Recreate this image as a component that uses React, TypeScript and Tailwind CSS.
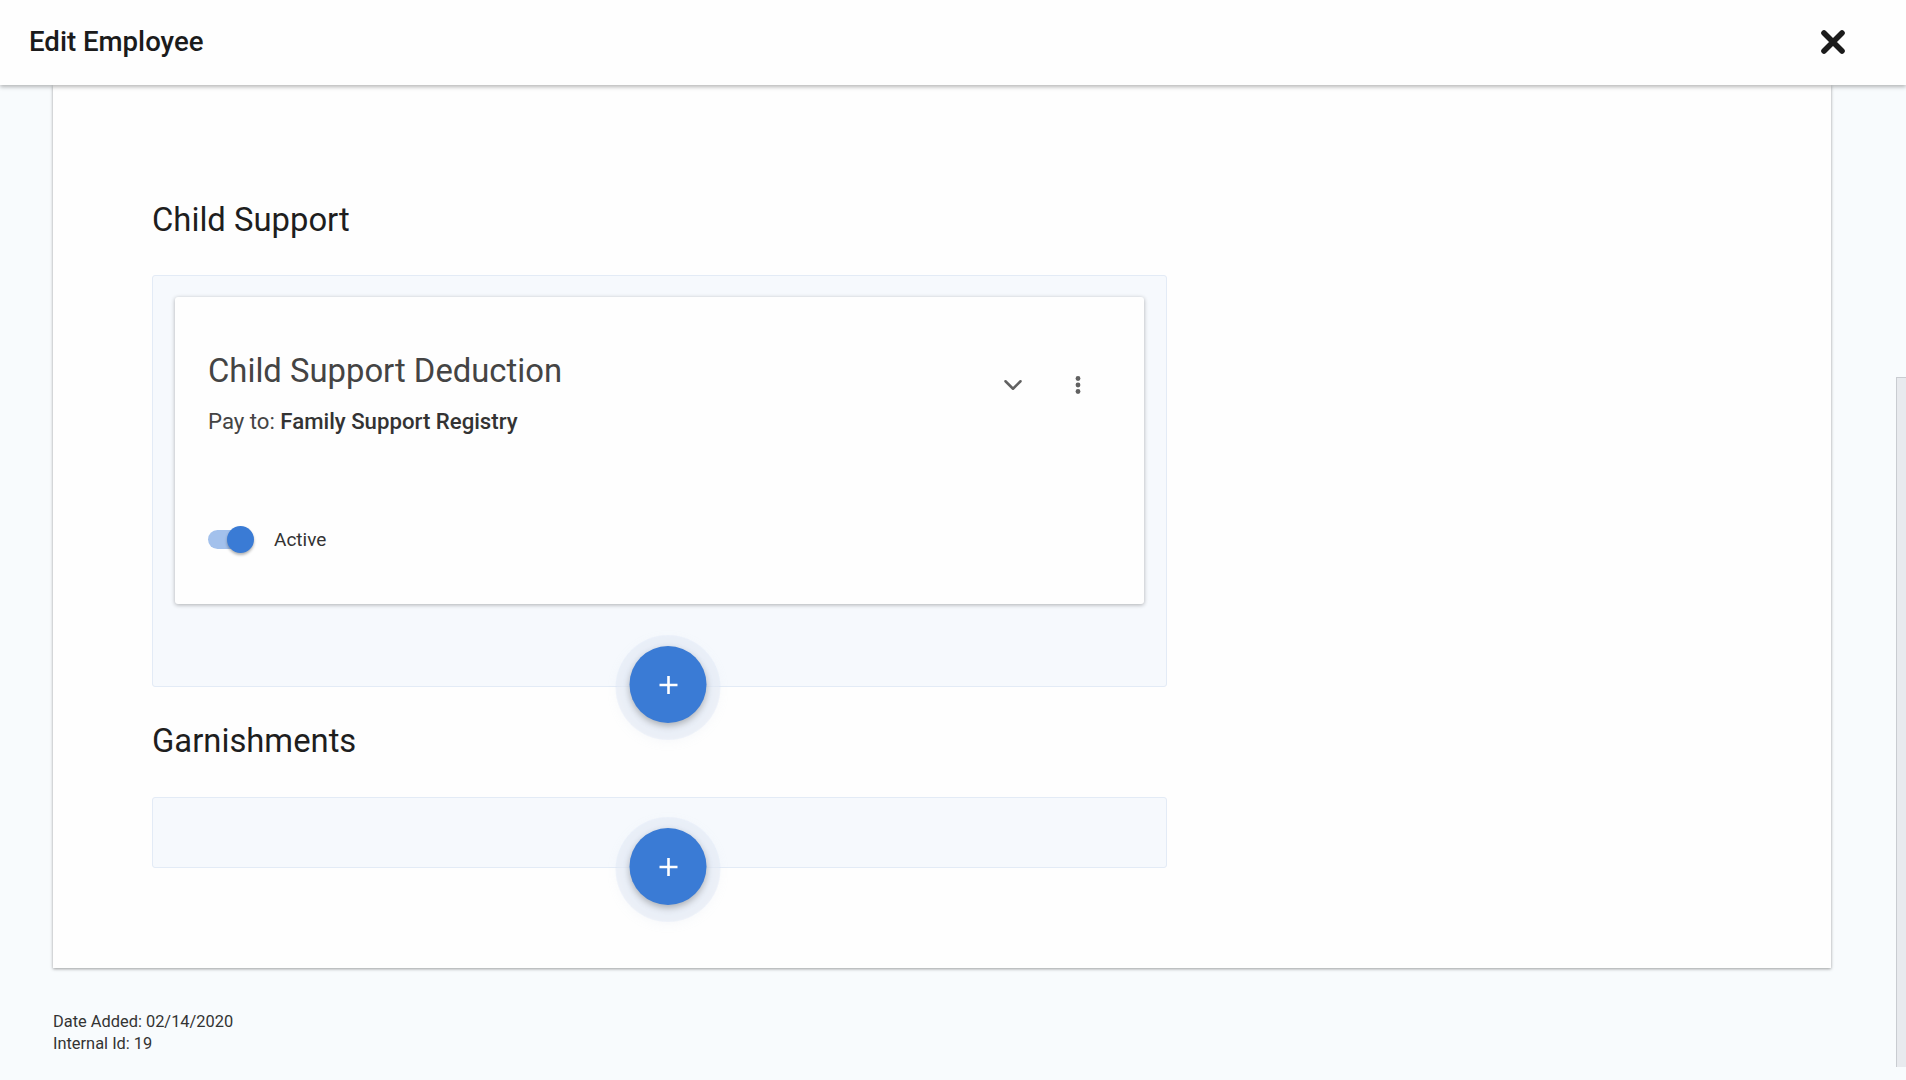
import { ChevronDown } from "lucide-react"

function CloseIcon() {
  return (
    <svg width="26" height="26" viewBox="0 0 26 26" fill="none">
      <path d="M4 4L22 22M22 4L4 22" stroke="#1b1b1b" strokeWidth="5.6" strokeLinecap="round" />
    </svg>
  )
}

function DotsIcon() {
  return (
    <svg width="24" height="24" viewBox="0 0 24 24" fill="#616161">
      <circle cx="12" cy="5.5" r="2.4" />
      <circle cx="12" cy="12" r="2.4" />
      <circle cx="12" cy="18.5" r="2.4" />
    </svg>
  )
}

function AddButton({ className }: { className: string }) {
  return (
    <button
      className={
        "absolute flex h-[77px] w-[77px] -translate-x-1/2 items-center justify-center rounded-full bg-[#3a7bd5] shadow-[0_3px_6px_rgba(0,0,0,0.25),0_3px_0_13px_rgba(232,237,245,0.4),0_3px_0_14px_rgba(214,226,244,0.3),0_6px_12px_10px_rgba(205,215,232,0.25)] " +
        className
      }
    >
      <svg width="22" height="22" viewBox="0 0 22 22" fill="none">
        <path d="M11 2V20M2 11H20" stroke="#ffffff" strokeWidth="2.6" />
      </svg>
    </button>
  )
}

export default function App() {
  return (
    <div className="relative min-h-screen bg-[#f8fbfd] font-['Roboto','Liberation_Sans',sans-serif]">
      {/* Header */}
      <header className="relative z-10 flex h-[85px] items-center justify-between bg-[#fefefe] pl-[29px] pr-[60px] pb-[2px] shadow-[0_2px_4px_rgba(0,0,0,0.28)]">
        <h1 className="text-[27.6px] font-medium text-[#1b1b1b]">Edit Employee</h1>
        <button className="flex items-center justify-center">
          <CloseIcon />
        </button>
      </header>

      {/* Panel */}
      <main className="ml-[53px] w-[1778px] bg-[#fefefe] pl-[99px] pt-[116px] pb-[100px] shadow-[0_1px_3px_rgba(0,0,0,0.38)]">
        <h2 className="text-[32.8px] leading-[38px] text-[#1e1e1e]">Child Support</h2>

        <section className="relative mt-[36px] w-[1015px] rounded-[3px] border border-[#e3ebf6] bg-[#f6f9fd] px-[22px] pt-[21px] pb-[82px]">
          <div className="rounded-[3px] bg-[#fefefe] px-[33px] pt-[55px] pb-[50px] shadow-[0_1px_4px_rgba(0,0,0,0.3)]">
            <div className="flex items-start justify-between">
              <div>
                <h3 className="text-[32.8px] leading-[38px] text-[#444444]">Child Support Deduction</h3>
                <p className="mt-[15px] text-[22.2px] leading-[33px] text-[#444444]">
                  Pay to: <span className="font-medium text-[#333333]">Family Support Registry</span>
                </p>
              </div>
              <div className="mr-[9px] mt-[9px] flex items-center gap-[17px]">
                <button className="flex h-12 w-12 items-center justify-center text-[#616161]">
                  <ChevronDown size={30} strokeWidth={2} />
                </button>
                <button className="flex h-12 w-12 items-center justify-center">
                  <DotsIcon />
                </button>
              </div>
            </div>

            <div className="mt-[88px] flex h-[28px] items-center">
              <div className="relative h-[28px] w-[46px]">
                <div className="absolute left-0 top-[4px] h-[19px] w-[45px] rounded-full bg-[#a3c1ec]" />
                <div className="absolute right-0 top-0 h-[27px] w-[27px] rounded-full bg-[#3a7bd5] shadow-[0_2px_3px_rgba(0,0,0,0.3)]" />
              </div>
              <span className="ml-[20px] text-[19px] text-[#333333]">Active</span>
            </div>
          </div>
          <AddButton className="left-[515px] -bottom-[37px]" />
        </section>

        <h2 className="mt-[35px] text-[32.8px] leading-[38px] text-[#1e1e1e]">Garnishments</h2>

        <section className="relative mt-[37px] h-[71px] w-[1015px] rounded-[3px] border border-[#e3ebf6] bg-[#f6f9fd]">
          <AddButton className="left-[515px] -bottom-[38px]" />
        </section>
      </main>

      {/* Footer meta */}
      <div className="ml-[53px] mt-[43px] text-[16.4px] leading-[22px] text-[#333333]">
        <div>Date Added: 02/14/2020</div>
        <div>Internal Id: 19</div>
      </div>

      {/* Scroll track */}
      <div className="absolute right-0 top-[377px] h-[690px] w-[10px] border-l border-t border-[#c9ccd1] bg-[#e8eaee]" />
    </div>
  )
}
